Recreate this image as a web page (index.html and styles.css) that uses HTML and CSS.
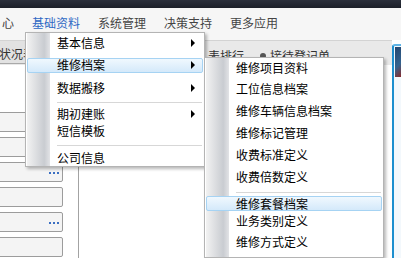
FILE: index.html
```html
<!DOCTYPE html>
<html lang="zh-CN">
<head>
    <meta charset="UTF-8">
    <title>维修管理</title>
    <link rel="stylesheet" href="styles.css">
</head>
<body>
    <div class="topbar"></div>
    <nav class="menubar">
        <span class="nav-item">心</span>
        <span class="nav-item active">基础资料</span>
        <span class="nav-item">系统管理</span>
        <span class="nav-item">决策支持</span>
        <span class="nav-item">更多应用</span>
    </nav>
    <div class="shell">
        <div class="main-col">
            <div class="toolbar">
                <div class="tab">状况表</div>
                <div class="quick-links">
                    <span>表排行</span>
                    <span class="dot"></span>
                    <span>接待登记单</span>
                </div>
            </div>
            <div class="workspace">
                <div class="form-panel">
                    <div class="field"></div>
                    <div class="field"></div>
                    <div class="field"><span class="more"></span></div>
                    <div class="field"></div>
                    <div class="field"><span class="more"></span></div>
                    <div class="field"></div>
                </div>
                <div class="main-panel"></div>
            </div>
        </div>
        <div class="side">
            <div class="side-pic"></div>
        </div>
    </div>

    <!-- dropdown: 基础资料 -->
    <div class="menu menu-main">
        <div class="item has-sub">基本信息</div>
        <div class="item has-sub active">维修档案</div>
        <div class="item has-sub">数据搬移</div>
        <div class="sep"></div>
        <div class="item has-sub">期初建账</div>
        <div class="item">短信模板</div>
        <div class="sep"></div>
        <div class="item">公司信息</div>
    </div>

    <!-- submenu: 维修档案 -->
    <div class="menu menu-sub">
        <div class="item">维修项目资料</div>
        <div class="item">工位信息档案</div>
        <div class="item">维修车辆信息档案</div>
        <div class="item">维修标记管理</div>
        <div class="item">收费标准定义</div>
        <div class="item">收费倍数定义</div>
        <div class="sep"></div>
        <div class="item active">维修套餐档案</div>
        <div class="item">业务类别定义</div>
        <div class="item">维修方式定义</div>
    </div>
</body>
</html>
```

FILE: styles.css
```css
body {
    margin: 0;
    width: 401px;
    height: 258px;
    overflow: hidden;
    position: relative;
    font-family: "Noto Sans CJK SC", "Microsoft YaHei", sans-serif;
    font-size: 12px;
    background: #fff;
}
.topbar {
    height: 8px;
    background: linear-gradient(#2b303c, #1c2029);
}
.menubar {
    height: 32px;
    display: flex;
    gap: 18px;
    padding-left: 2px;
    padding-top: 7px;
    box-sizing: border-box;
    background: #f6f6f6;
    line-height: 16px;
    color: #444;
}
.nav-item.active {
    color: #2e68c4;
}
.shell {
    display: flex;
    height: 218px;
}
.main-col {
    flex: 1;
    display: flex;
    flex-direction: column;
}
.toolbar {
    height: 25px;
    display: flex;
    align-items: flex-start;
    background: #e9e9e9;
    border-top: 1px solid #d3d3d3;
    box-sizing: border-box;
    color: #333;
}
.tab {
    margin-left: -8px;
    height: 23px;
    padding: 0 6px;
    line-height: 23px;
    padding-top: 1px;
    background: #e2e2e2;
    border: 1px solid #a9a9a9;
    border-top: none;
    box-sizing: border-box;
}
.quick-links {
    display: flex;
    align-items: center;
    margin-left: 166px;
    margin-top: 8px;
    line-height: 14px;
}
.dot {
    width: 6px;
    height: 6px;
    border-radius: 50%;
    background: #555;
    margin: 0 4px 0 16px;
}
.workspace {
    flex: 1;
    display: flex;
}
.form-panel {
    width: 78px;
    border-right: 1px solid #a3a3a3;
    padding-top: 47px;
    display: flex;
    flex-direction: column;
    gap: 5px;
}
.field {
    height: 20px;
    flex: none;
    width: 72px;
    margin-left: -9px;
    border: 1px solid #9c9c9c;
    border-radius: 2px;
    background: #f4f4f4;
    box-sizing: border-box;
    display: flex;
    align-items: center;
    justify-content: flex-end;
}
.more {
    width: 10px;
    height: 2px;
    margin: 1px 3px 0 0;
    background: repeating-linear-gradient(to right, #3b6fc2 0 2px, transparent 2px 4px);
}
.main-panel {
    flex: 1;
    background: #fff;
}
.side {
    width: 7px;
    margin-top: 4px;
    border-left: 2px solid #1d8fcf;
    border-top: 2px solid #5fb4e6;
    border-radius: 3px 0 0 0;
    background: #f3f8fc;
}
.side-pic {
    height: 30px;
    margin: 1px 0 0 1px;
    background: linear-gradient(135deg, #23456f, #34638f 60%, #8a2a2a);
}

/* dropdown menus */
.menu {
    position: absolute;
    width: 180px;
    box-sizing: border-box;
    border: 1px solid #b4b4b4;
    background: linear-gradient(to right, #f2f2f2, #c9ccd1 75%, #e2e3e6) 1px 0 / 23px 100% no-repeat, #fff;
    box-shadow: 2px 2px 3px rgba(0, 0, 0, 0.28);
    color: #000;
    display: grid;
}
.menu-main {
    left: 25px;
    top: 32px;
    height: 135px;
    grid-template-rows: 20px 24px 22px 7px 16px 18px 10px 16px;
}
.menu-sub {
    left: 204px;
    top: 57px;
    height: 201px;
    grid-template-rows: 20px 22px 22px 22px 22px 22px 8px 15px 19px 23px;
}
.item {
    display: flex;
    align-items: center;
    padding-left: 31px;
    line-height: 14px;
}
.item.has-sub::after {
    content: "";
    margin-left: auto;
    margin-right: 9px;
    border-left: 4px solid #000;
    border-top: 4px solid transparent;
    border-bottom: 4px solid transparent;
}
.item.active {
    align-self: center;
    height: 13px;
    margin: 0 1px;
    padding-left: 29px;
    border: 1px solid #a6d3f3;
    border-radius: 2px;
    background: linear-gradient(#f0f8fe, #d4e9fa);
}
.item.active.has-sub::after {
    margin-right: 7px;
}
.sep {
    align-self: center;
    height: 1px;
    margin: 0 2px 0 31px;
    background: #d7d7d7;
}
```
